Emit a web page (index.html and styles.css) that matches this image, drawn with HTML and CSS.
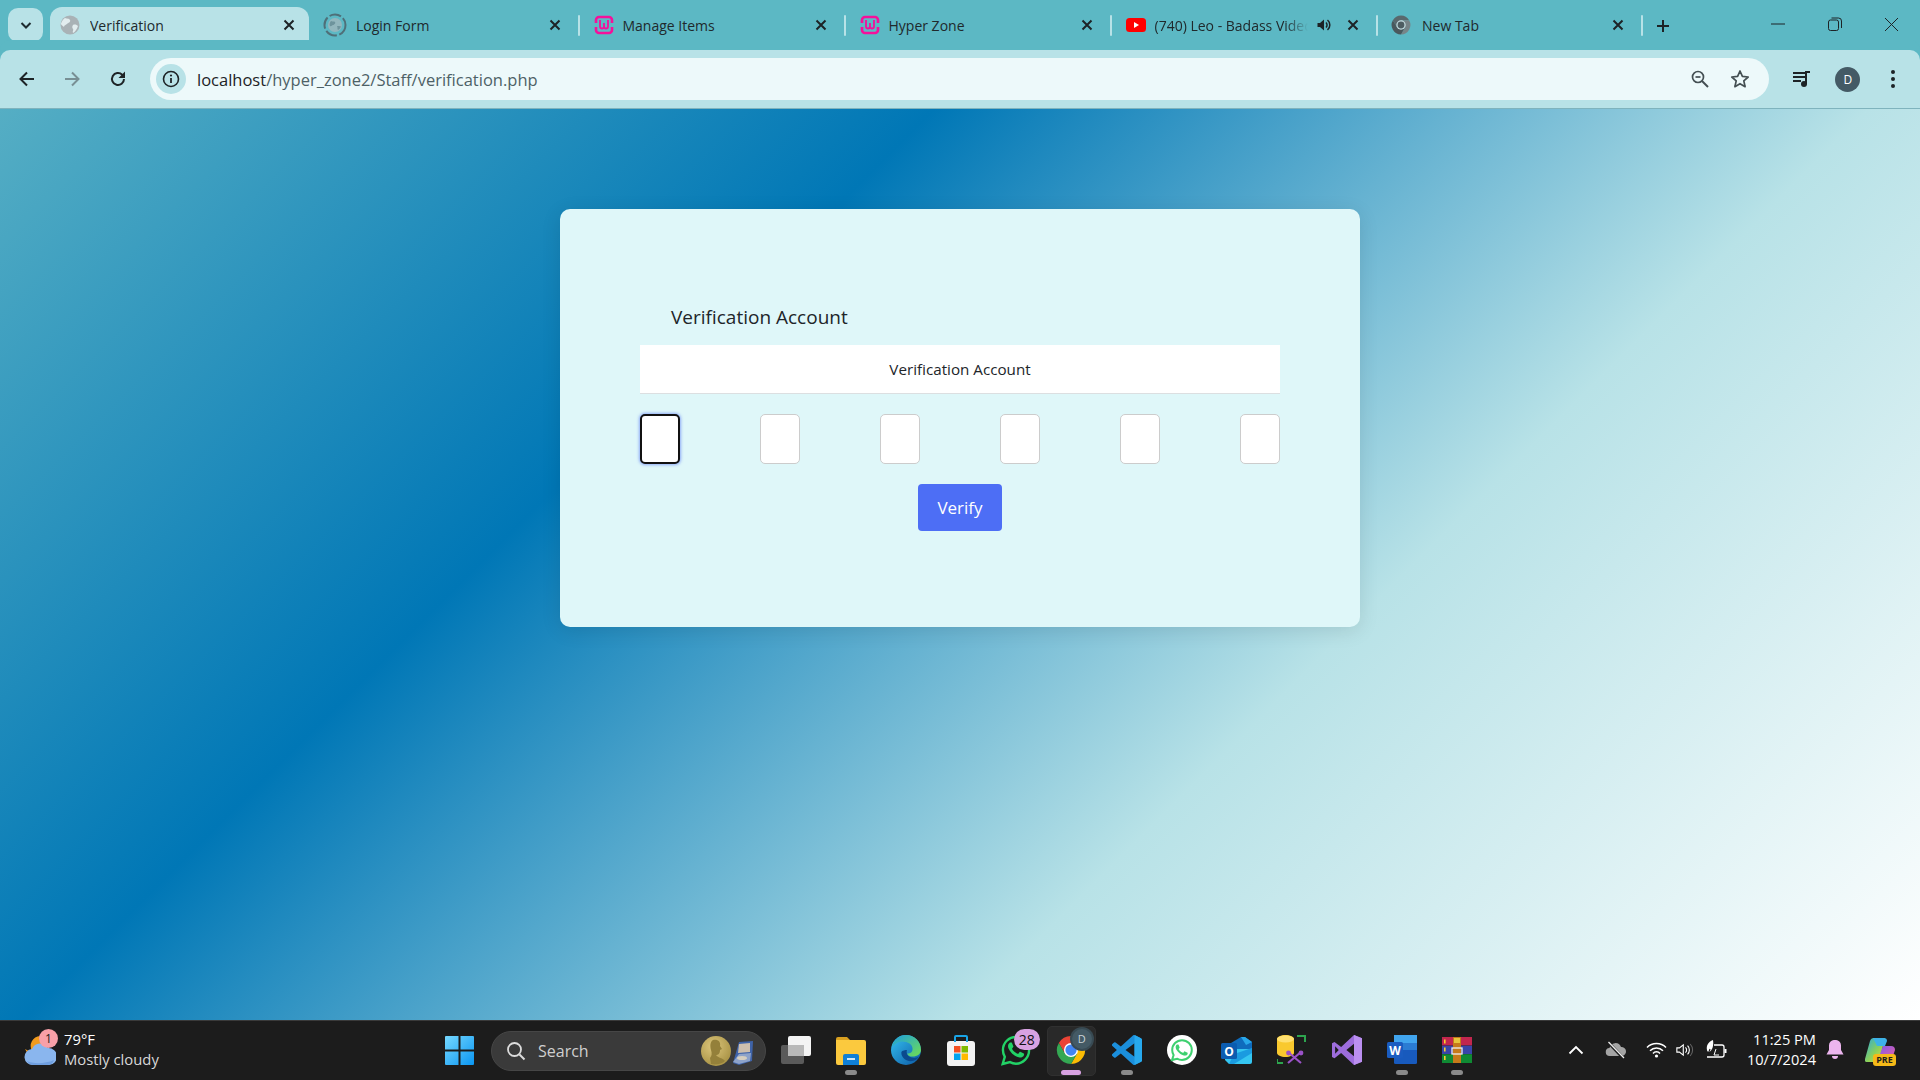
FILE: index.html
```html
<!DOCTYPE html>
<html lang="en">
<head>
<meta charset="utf-8">
<title>Verification</title>
<link rel="stylesheet" href="styles.css">
</head>
<body>
<header class="tabstrip">
  <div class="tab-search"><svg width="16" height="16" viewBox="0 0 16 16"><path d="M3.5 6 8 10.5 12.5 6" fill="none" stroke="#1d2b30" stroke-width="2"/></svg></div>
  <div class="tab tab-active">
    <svg class="fav" viewBox="0 0 20 20"><circle cx="10" cy="10" r="9.5" fill="#a9b2b6"/><path d="M5 3c2 1 4 0 5 2s-2 3-3 4-3 1-3 3c-1-1-3-2-3-3s2-5 4-6zM13 10c2-1 4 0 5 1-1 3-3 6-5 7-1-2 1-3 0-4s-1-3 0-4z" fill="#e2edef"/></svg>
    <span class="tab-title">Verification</span>
    <svg class="close" viewBox="0 0 16 16"><path d="M3.5 3.5l9 9m0-9l-9 9" stroke="#1d2326" stroke-width="2"/></svg>
  </div>
  <div class="tab tab-login">
    <svg class="fav fav-ring" viewBox="0 0 24 24"><circle cx="12" cy="12" r="10.5" fill="none" stroke="#4f6f78" stroke-width="2" stroke-dasharray="12 2.5"/><circle cx="12" cy="12" r="7" fill="#93b6bd"/><path d="M8 8c2 1 3 0 4 1s-1 3-2 3-2 2-3 1 0-4 1-5zM14 13c1 0 3 0 4 .5-.5 1.500-2 3-3 3.500-1-1 0-2-1-4z" fill="#6d939c"/></svg>
    <span class="tab-title">Login Form</span>
    <svg class="close" viewBox="0 0 16 16"><path d="M3.500 3.500l9 9m0-9l-9 9" stroke="#1d2326" stroke-width="2"/></svg>
  </div>
  <i class="sep"></i>
  <div class="tab">
    <svg class="fav" viewBox="0 0 20 20"><path d="M2 8V5a3 3 0 0 1 3-3h10a3 3 0 0 1 3 3v3M2 12v3a3 3 0 0 0 3 3h10a3 3 0 0 0 3-3v-3" fill="none" stroke="#f5109b" stroke-width="2.600"/><path d="M6 5v6.500a2 2 0 0 0 4 0V8m0 3.500a2 2 0 0 0 4 0V5" fill="none" stroke="#f5109b" stroke-width="1.800"/></svg>
    <span class="tab-title">Manage Items</span>
    <svg class="close" viewBox="0 0 16 16"><path d="M3.500 3.500l9 9m0-9l-9 9" stroke="#1d2326" stroke-width="2"/></svg>
  </div>
  <i class="sep"></i>
  <div class="tab">
    <svg class="fav" viewBox="0 0 20 20"><path d="M2 8V5a3 3 0 0 1 3-3h10a3 3 0 0 1 3 3v3M2 12v3a3 3 0 0 0 3 3h10a3 3 0 0 0 3-3v-3" fill="none" stroke="#f5109b" stroke-width="2.600"/><path d="M6 5v6.500a2 2 0 0 0 4 0V8m0 3.500a2 2 0 0 0 4 0V5" fill="none" stroke="#f5109b" stroke-width="1.800"/></svg>
    <span class="tab-title">Hyper Zone</span>
    <svg class="close" viewBox="0 0 16 16"><path d="M3.500 3.500l9 9m0-9l-9 9" stroke="#1d2326" stroke-width="2"/></svg>
  </div>
  <i class="sep"></i>
  <div class="tab">
    <svg class="fav" viewBox="0 0 20 20"><rect x="0" y="3" width="20" height="14" rx="3.500" fill="#f00"/><path d="M8 7l5 3-5 3z" fill="#fff"/></svg>
    <span class="tab-title tab-fade">(740) Leo - Badass Video Song</span>
    <svg class="speaker" viewBox="0 0 16 16"><path d="M1.500 6v4h2.500l4 3.500v-11L4 6z" fill="#1d2326"/><path d="M10 5.500a3.500 3.500 0 0 1 0 5M11.500 3a6.500 6.500 0 0 1 0 10" fill="none" stroke="#1d2326" stroke-width="1.500"/></svg>
    <svg class="close" viewBox="0 0 16 16"><path d="M3.500 3.500l9 9m0-9l-9 9" stroke="#1d2326" stroke-width="2"/></svg>
  </div>
  <i class="sep"></i>
  <div class="tab tab-newtab">
    <svg class="fav" viewBox="0 0 32 32"><path d="M3 8.500A15 15 0 0 1 29 8.500H16L9.500 19.750Z" fill="#59686d"/><path d="M29 8.500A15 15 0 0 1 16 31L22.500 19.750 16 8.500Z" fill="#778488"/><path d="M16 31A15 15 0 0 1 3 8.500L9.500 19.750H22.500Z" fill="#4a585d"/><circle cx="16" cy="16" r="7.500" fill="#c4dde1"/><circle cx="16" cy="16" r="5.500" fill="#4e5d62"/></svg>
    <span class="tab-title">New Tab</span>
    <svg class="close" viewBox="0 0 16 16"><path d="M3.500 3.500l9 9m0-9l-9 9" stroke="#1d2326" stroke-width="2"/></svg>
  </div>
  <i class="sep"></i>
  <div class="tab-plus"><svg width="16" height="16" viewBox="0 0 16 16"><path d="M8 2v12M2 8h12" stroke="#1d2326" stroke-width="2"/></svg></div>
  <div class="winctl">
    <span><svg width="14" height="14" viewBox="0 0 14 14"><path d="M0 7h14" stroke="#1d2326" stroke-width="1"/></svg></span>
    <span><svg width="14" height="14" viewBox="0 0 14 14"><rect x=".5" y="3" width="10" height="10.500" rx="2" fill="none" stroke="#1d2326"/><path d="M3.500 1h7a3 3 0 0 1 3 3v7" fill="none" stroke="#1d2326"/></svg></span>
    <span><svg width="15" height="15" viewBox="0 0 15 15"><path d="M1 1l13 13m0-13L1 14" stroke="#1d2326" stroke-width="1"/></svg></span>
  </div>
</header>

<nav class="toolbar">
  <div class="navbtn"><svg width="18" height="18" viewBox="0 0 18 18"><path d="M16 9H3M9 2.500 2.500 9 9 15.500" fill="none" stroke="#1d2326" stroke-width="2"/></svg></div>
  <div class="navbtn"><svg width="18" height="18" viewBox="0 0 18 18"><path d="M2 9h13M9 2.500 15.500 9 9 15.500" fill="none" stroke="#788f94" stroke-width="2"/></svg></div>
  <div class="navbtn"><svg width="18" height="18" viewBox="0 0 18 18"><path d="M15 9a6 6 0 1 1-1.800-4.300L15 6.500" fill="none" stroke="#1d2326" stroke-width="2"/><path d="M16 1.500V8H9.500z" fill="#1d2326"/></svg></div>
  <div class="omnibox">
    <div class="info-chip"><svg width="18" height="18" viewBox="0 0 18 18"><circle cx="9" cy="9" r="7.500" fill="none" stroke="#1d2326" stroke-width="1.600"/><path d="M9 8v5" stroke="#1d2326" stroke-width="1.800"/><circle cx="9" cy="5.500" r="1.100" fill="#1d2326"/></svg></div>
    <div class="url"><span class="url-host">localhost</span><span class="url-path">/hyper_zone2/Staff/verification.php</span></div>
    <div class="omni-btn"><svg width="20" height="20" viewBox="0 0 20 20"><circle cx="8" cy="8" r="5.500" fill="none" stroke="#444f52" stroke-width="1.700"/><path d="M5.500 8h5" stroke="#444f52" stroke-width="1.700"/><path d="M12 12l6 6" stroke="#444f52" stroke-width="1.900"/></svg></div>
    <div class="omni-btn"><svg width="20" height="20" viewBox="0 0 20 20"><path d="M10 2l2.400 5.400 5.800.6-4.400 3.900 1.300 5.800-5.100-3-5.100 3 1.300-5.800L1.800 8l5.800-.6z" fill="none" stroke="#444f52" stroke-width="1.700" stroke-linejoin="round"/></svg></div>
  </div>
  <div class="tool-end">
    <div class="navbtn"><svg width="20" height="20" viewBox="0 0 20 20"><path d="M1 4h12M1 8h12M1 12h8" stroke="#1d2326" stroke-width="2"/><path d="M14 15V3h4" fill="none" stroke="#1d2326" stroke-width="2"/><circle cx="12" cy="15" r="3" fill="#1d2326"/></svg></div>
    <div class="navbtn"><span class="avatar">D</span></div>
    <div class="navbtn"><svg width="6" height="20" viewBox="0 0 6 20"><circle cx="3" cy="3" r="2" fill="#1d2326"/><circle cx="3" cy="10" r="2" fill="#1d2326"/><circle cx="3" cy="17" r="2" fill="#1d2326"/></svg></div>
  </div>
</nav>

<main class="page">
  <section class="card">
    <h5 class="card-title">Verification Account</h5>
    <div class="card-header">Verification Account</div>
    <form class="code-row">
      <input class="code focused" type="text" maxlength="1">
      <input class="code" type="text" maxlength="1">
      <input class="code" type="text" maxlength="1">
      <input class="code" type="text" maxlength="1">
      <input class="code" type="text" maxlength="1">
      <input class="code" type="text" maxlength="1">
    </form>
    <div class="actions"><button class="verify" type="button">Verify</button></div>
  </section>
</main>

<footer class="taskbar">
  <div class="weather">
    <div class="weather-icon">
      <svg width="32" height="34" viewBox="0 0 32 34"><path d="M16 2a10 10 0 0 0-8 15 10 10 0 0 1-7-2 12 12 0 0 0 22 0C19 12 15 8 16 2z" fill="#f29b1d"/><path d="M9 31a8 8 0 0 1-1-16 9 9 0 0 1 16-1 7.500 7.500 0 0 1 1 17z" fill="#8ab6ee"/><path d="M3 27c6 3 18 3 27-1a7 7 0 0 1-6 5H9a8 8 0 0 1-6-4z" fill="#6f9fe0"/></svg>
      <span class="weather-badge">1</span>
    </div>
    <div class="weather-text"><div class="temp">79°F</div><div class="cond">Mostly cloudy</div></div>
  </div>
  <div class="task-start"><svg width="29" height="29" viewBox="0 0 29 29"><defs><linearGradient id="win" x1="0" y1="0" x2="1" y2="1"><stop offset="0" stop-color="#76d8ff"/><stop offset="1" stop-color="#0a96f2"/></linearGradient></defs><path d="M1 0h12.500v13.500H0V1a1 1 0 0 1 1-1zM15.500 0H28a1 1 0 0 1 1 1v12.500H15.500zM0 15.500h13.500V29H1a1 1 0 0 1-1-1zM15.500 15.500H29V28a1 1 0 0 1-1 1H15.500z" fill="url(#win)"/></svg></div>
  <div class="task-search">
    <svg width="20" height="20" viewBox="0 0 20 20"><circle cx="8.500" cy="8.500" r="6.500" fill="none" stroke="#dcdcdc" stroke-width="1.800"/><path d="M13.500 13.500l5 5" stroke="#dcdcdc" stroke-width="2"/></svg>
    <span class="search-label">Search</span>
    <svg class="medal" width="58" height="32" viewBox="0 0 58 32"><defs><radialGradient id="gold" cx=".4" cy=".35" r=".8"><stop offset="0" stop-color="#dcc67c"/><stop offset="1" stop-color="#a08a3c"/></radialGradient></defs><circle cx="21" cy="16" r="15" fill="url(#gold)"/><path d="M12 5c5-1 8 2 7 6l2 3-2 1c0 4-2 5-4 5 2 3 7 3 9 6-3 3-9 4-14 3l-1-6c2-2 2-5 1-8-1-4-1-8 2-10z" fill="#94803a" transform="translate(6 0)"/><path d="M38 28l6-21 14-1-1 20-13 4z" fill="#3f63a8"/><path d="M44 9l11-1v9l-12 1z" fill="#cdbfae"/><path d="M38 27l6-8 12-1-1 8-11 3z" fill="#8ea3c9"/><ellipse cx="47" cy="23" rx="5" ry="2" fill="#d6cfc0"/></svg>
  </div>
  <div class="task-items">
    <div class="task-item"><svg width="31" height="28" viewBox="0 0 31 28"><rect x="1" y="9" width="23" height="19" rx="2" fill="#5a5a5a"/><rect x="8" y="0" width="23" height="20" rx="2" fill="#f4f4f4"/><rect x="8" y="9" width="16" height="11" fill="#b9b9b9"/></svg></div>
    <div class="task-item"><svg width="30" height="30" viewBox="0 0 30 30"><path d="M0 4a2 2 0 0 1 2-2h9l3 3h-14z" fill="#d9a020"/><path d="M0 5h28a2 2 0 0 1 2 2v21a2 2 0 0 1-2 2H2a2 2 0 0 1-2-2z" fill="#fbc93e"/><path d="M7 21a2 2 0 0 1 2-2h12a2 2 0 0 1 2 2v9H7z" fill="#0f7fd6"/><rect x="11" y="23" width="8" height="2" fill="#cde8fb"/></svg><i class="dot"></i></div>
    <div class="task-item"><svg width="30" height="30" viewBox="0 0 32 32"><defs><linearGradient id="edge1" x1="0" y1="0" x2="1" y2="1"><stop offset="0" stop-color="#35c1f1"/><stop offset="1" stop-color="#0c59a4"/></linearGradient><linearGradient id="edge2" x1="0" y1="0" x2="1" y2="1"><stop offset="0" stop-color="#1b9de2"/><stop offset="1" stop-color="#70df50"/></linearGradient></defs><circle cx="16" cy="16" r="16" fill="url(#edge1)"/><path d="M1 12C3 5 9 0 16 0c9 0 16 7 16 16 0 4-4 7-9 7-3 0-5-1-6-3 4 0 6-2 6-5 0-5-5-8-11-8S4 11 1 12z" fill="url(#edge2)"/><path d="M11 19c0 5 5 9 10 9 4 0 7-2 9-5-2 1-5 2-8 1-4-1-6-4-5-8-3 0-6 1-6 3z" fill="#0b4a8e"/></svg></div>
    <div class="task-item"><svg width="30" height="32" viewBox="0 0 30 32"><rect x="1" y="7" width="28" height="25" rx="3" fill="#f3f3f3"/><path d="M9 8V3a1 1 0 0 1 1-1h10a1 1 0 0 1 1 1v5" fill="none" stroke="#19a4e6" stroke-width="2"/><rect x="8" y="12" width="6.500" height="6.500" fill="#f25022"/><rect x="15.500" y="12" width="6.500" height="6.500" fill="#7fba00"/><rect x="8" y="19.500" width="6.500" height="6.500" fill="#00a4ef"/><rect x="15.500" y="19.500" width="6.500" height="6.500" fill="#ffb900"/></svg></div>
    <div class="task-item"><svg width="32" height="32" viewBox="0 0 24 24"><path d="M12 2.200C6.600 2.200 2.200 6.600 2.200 12c0 1.900.5 3.600 1.400 5.100L2 22.500l5.500-1.400c1.400.8 3 1.200 4.500 1.200 5.400 0 9.800-4.700 9.800-10.100S17.400 2.200 12 2.200z" fill="none" stroke="#22d266" stroke-width="1.800"/><path d="M17.472 14.382c-.297-.149-1.758-.867-2.030-.967-.273-.099-.471-.148-.670.150-.197.297-.767.966-.940 1.164-.173.199-.347.223-.644.075-.297-.150-1.255-.463-2.390-1.475-.883-.788-1.480-1.761-1.653-2.059-.173-.297-.018-.458.130-.606.134-.133.298-.347.446-.520.149-.174.198-.298.298-.497.099-.198.050-.371-.025-.520-.075-.149-.669-1.612-.916-2.207-.242-.579-.487-.500-.669-.510-.173-.008-.371-.010-.570-.010-.198 0-.520.074-.792.372-.272.297-1.040 1.016-1.040 2.479 0 1.462 1.065 2.875 1.213 3.074.149.198 2.096 3.200 5.077 4.487.709.306 1.262.489 1.694.625.712.227 1.360.195 1.871.118.571-.085 1.758-.719 2.006-1.413.248-.694.248-1.289.173-1.413-.074-.124-.272-.198-.570-.347z" fill="#22d266"/></svg><span class="count-badge">28</span></div>
    <div class="task-item is-active"><svg width="30" height="30" viewBox="0 0 32 32"><path d="M3 8.500A15 15 0 0 1 29 8.500H16L9.500 19.750Z" fill="#ea4335"/><path d="M29 8.500A15 15 0 0 1 16 31L22.500 19.750 16 8.500Z" fill="#fbbc04"/><path d="M16 31A15 15 0 0 1 3 8.500L9.500 19.750H22.500Z" fill="#34a853"/><circle cx="16" cy="16" r="7.500" fill="#fff"/><circle cx="16" cy="16" r="6" fill="#4285f4"/></svg><span class="chrome-badge">D</span><i class="dot dot-active"></i></div>
    <div class="task-item"><svg width="30" height="30" viewBox="0 0 24 24"><path d="M23.150 2.587L18.210.210a1.494 1.494 0 0 0-1.705.290l-9.460 8.630-4.120-3.128a.999.999 0 0 0-1.276.057L.327 7.261A1 1 0 0 0 .326 8.740L3.899 12 .326 15.260a1 1 0 0 0 .001 1.479L1.650 17.940a.999.999 0 0 0 1.276.057l4.120-3.128 9.460 8.630a1.492 1.492 0 0 0 1.704.290l4.942-2.377A1.500 1.500 0 0 0 24 20.060V3.939a1.500 1.500 0 0 0-.850-1.352zm-5.146 14.861L10.826 12l7.178-5.448v10.896z" fill="#1b8fdc"/><path d="M18 0v24a2 2 0 0 0 1-.4l4-2A1.500 1.500 0 0 0 24 20V4a1.500 1.500 0 0 0-.850-1.400L19 .4A2 2 0 0 0 18 0z" fill="#27a9ee"/></svg><i class="dot"></i></div>
    <div class="task-item"><svg width="30" height="30" viewBox="0 0 30 30"><circle cx="15" cy="15" r="15" fill="#fff"/><g transform="translate(3 3)"><path d="M12 2.200C6.600 2.200 2.200 6.600 2.200 12c0 1.900.5 3.600 1.400 5.100L2 22l5-1.300c1.400.8 3 1.300 5 1.300 5.400 0 9.800-4.600 9.800-10S17.400 2.200 12 2.200z" fill="none" stroke="#3dd06f" stroke-width="2"/><path d="M17 14.400c-.3-.150-1.700-.850-2-1-.3-.100-.500-.150-.700.150l-.900 1.150c-.200.200-.350.200-.650.100-.300-.150-1.250-.450-2.400-1.500-.900-.800-1.450-1.750-1.650-2.050-.150-.300 0-.450.150-.600l.450-.500c.150-.200.200-.300.300-.500s.050-.400 0-.500l-.900-2.200c-.250-.600-.500-.500-.650-.500h-.600c-.200 0-.500.050-.800.350-.250.300-1 1-1 2.500s1.050 2.850 1.200 3.050c.150.200 2.100 3.200 5.100 4.500 2.500 1 3 .800 3.550.750.550-.100 1.750-.700 2-1.400.250-.700.250-1.300.150-1.400-.050-.100-.250-.200-.650-.350z" fill="#3dd06f"/></g></svg></div>
    <div class="task-item"><svg width="31" height="28" viewBox="0 0 31 28"><path d="M10 7l10-6h4l7 5v7L16 22z" fill="#0f6cbd"/><path d="M20 1h4l7 5-6 3z" fill="#28a8ea"/><path d="M4 13h27v13a2 2 0 0 1-2 2H8l-4-4z" fill="#35c6f1"/><path d="M13 18l18-6v5l-18 11H8z" fill="#1a9be0"/><rect x="0" y="7" width="16" height="16" rx="1.500" fill="#0b5cb0"/><text x="8" y="19.500" class="chip-letter">O</text></svg></div>
    <div class="task-item"><svg width="29" height="29" viewBox="0 0 29 29"><path d="M0 4c0-2 4-4 8.500-4S17 2 17 4v14c0 2-4 4-8.500 4S0 20 0 18z" fill="#f9c92e"/><ellipse cx="8.500" cy="4" rx="8.500" ry="3.500" fill="#ffe070"/><path d="M20 1h8v6M0 24v4h6" fill="none" stroke="#2da44e" stroke-width="2"/><path d="M11 17l13 11M24 17L11 28" stroke="#9a52c7" stroke-width="2.200"/><circle cx="11.500" cy="18" r="2.400" fill="#9a52c7"/><circle cx="24" cy="18" r="2.400" fill="#9a52c7"/></svg></div>
    <div class="task-item"><svg width="30" height="30" viewBox="0 0 24 24"><path d="M17.600 0 24 2.600v18.800L17.600 24 7.300 14.400l-5.300 4.100L0 17.500V6.500l2-1 5.300 4.100z" fill="#9d6ddc"/><path d="M17.600 0 24 2.600v18.800L17.600 24z" fill="#bb8ff0"/><path d="M17.600 7 11.500 12l6.100 5zM2.500 9v6l2.900-3z" fill="#1c1c1c"/></svg></div>
    <div class="task-item"><svg width="30" height="29" viewBox="0 0 30 29"><rect x="7" y="0" width="23" height="29" rx="1.500" fill="#185abd"/><rect x="7" y="0" width="23" height="8" fill="#41a5ee"/><rect x="7" y="8" width="23" height="7" fill="#2b7cd3"/><rect x="0" y="7" width="16" height="16" rx="1.500" fill="#1a5cc0"/><text x="8" y="19.500" class="chip-letter">W</text></svg><i class="dot"></i></div>
    <div class="task-item"><svg width="30" height="26" viewBox="0 0 30 26"><rect x="0" y="0" width="30" height="8.500" fill="#c2264e"/><rect x="0" y="8.700" width="30" height="8.300" fill="#3944a8"/><rect x="0" y="17.200" width="30" height="8.800" fill="#0f8a33"/><rect x="11" y="0" width="8" height="26" fill="#c57a1a"/><rect x="12" y="1" width="6" height="5" fill="#e6c43c"/><rect x="10" y="11" width="10" height="6" fill="none" stroke="#eee" stroke-width="1.300"/><rect x="2" y="2.500" width="1.600" height="4" fill="#f8d030"/><rect x="2" y="10.500" width="1.600" height="4" fill="#f8d030"/><rect x="2" y="19" width="1.600" height="4" fill="#f8d030"/></svg><i class="dot"></i></div>
  </div>
  <div class="tray">
    <div class="tray-item w40"><svg width="16" height="10" viewBox="0 0 16 10"><path d="M1.500 8.500 8 2l6.500 6.500" fill="none" stroke="#fff" stroke-width="1.800"/></svg></div>
    <div class="tray-item w40"><svg width="22" height="18" viewBox="0 0 22 18"><path d="M5 15a4 4 0 0 1-.5-8A6 6 0 0 1 16 6a4.500 4.500 0 0 1 1 9z" fill="#a4a4a4"/><path d="M3 1l15 16" stroke="#1c1c1c" stroke-width="3"/><path d="M3.500 1l15.500 16" stroke="#eee" stroke-width="1.300"/></svg></div>
    <div class="tray-item w40"><svg width="21" height="16" viewBox="0 0 21 16"><path d="M1 5.500a13.500 13.500 0 0 1 19 0M4 8.700a9 9 0 0 1 13 0M7 11.500a4.500 4.500 0 0 1 7 0" fill="none" stroke="#fff" stroke-width="1.500"/><circle cx="10.500" cy="14" r="1.600" fill="#fff"/></svg></div>
    <div class="tray-item w18"><svg width="21" height="16" viewBox="0 0 21 16"><path d="M1 5.500v5h3l4.500 3.500V2L4 5.500z" fill="none" stroke="#fff" stroke-width="1.300"/><path d="M11 5a4 4 0 0 1 0 6M13.500 3a7 7 0 0 1 0 10" fill="none" stroke="#fff" stroke-width="1.300"/><path d="M16.500 1a10 10 0 0 1 0 14" fill="none" stroke="#666" stroke-width="1.200"/></svg></div>
    <div class="tray-item w44"><svg width="21" height="19" viewBox="0 0 21 19"><path d="M7 0C2 2 0 6 1 10c0 1 1 2 2 2 3-1 5-6 4-12z" fill="#fff"/><path d="M1 17l3-8" stroke="#1c1c1c" stroke-width="1.200"/><path d="M8 5h8a2 2 0 0 1 2 2v8a2 2 0 0 1-2 2H1" fill="none" stroke="#fff" stroke-width="1.300"/><rect x="18.500" y="9" width="2" height="4" fill="#fff"/><path d="M10 9l-2 6h5" fill="none" stroke="#fff" stroke-width="1"/></svg></div>
    <div class="clock"><div>11:25 PM</div><div>10/7/2024</div></div>
    <div class="tray-item w38"><svg width="18" height="20" viewBox="0 0 18 20"><path d="M9 0a5.500 5.500 0 0 1 6 6v4l2.500 4.500H.5L3 10V6a5.500 5.500 0 0 1 6-6z" fill="#ecb5ee"/><path d="M6 16h6a3 3 0 0 1-6 0z" fill="#ecb5ee"/></svg></div>
    <div class="tray-item w52 copilot">
      <svg width="30" height="24" viewBox="0 0 30 24"><defs><linearGradient id="cop1" x1="0" y1="0" x2="1" y2="1"><stop offset="0" stop-color="#27a9e0"/><stop offset=".55" stop-color="#8ad05a"/><stop offset="1" stop-color="#f3d33c"/></linearGradient><linearGradient id="cop2" x1="0" y1="0" x2="1" y2="1"><stop offset="0" stop-color="#7a5af0"/><stop offset="1" stop-color="#f35f9a"/></linearGradient></defs><path d="M8 0h12l-6 24H2a2 2 0 0 1-2-3L5 3a4 4 0 0 1 3-3z" fill="url(#cop1)"/><path d="M18 8h8a4 4 0 0 1 4 4l-3 9a4 4 0 0 1-4 3H12z" fill="url(#cop2)"/><path d="M8 0h11a3 3 0 0 1 3 3L20 8h-8z" fill="#3db2e8"/></svg>
      <span class="pre-badge">PRE</span>
    </div>
  </div>
</footer>
</body>
</html>
```

FILE: styles.css
```css
* { box-sizing: border-box; }
html, body { height: 100%; }
body {
  margin: 0;
  height: 1080px;
  overflow: hidden;
  display: flex;
  flex-direction: column;
  font-family: "Open Sans", "Noto Sans", sans-serif;
  background: #1c1c1c;
}

/* tab strip */
.tabstrip {
  height: 50px;
  flex: none;
  display: flex;
  align-items: flex-end;
  background: #5cb8c4;
  padding-left: 8px;
  color: #20292c;
}
.tab-search {
  width: 35px;
  height: 34px;
  margin-right: 7px;
  align-self: flex-start;
  margin-top: 8px;
  border-radius: 10px;
  background: #b8e2e7;
  display: flex;
  align-items: center;
  justify-content: center;
}
.tab {
  position: relative;
  width: 264px;
  height: 43px;
  flex: none;
  display: flex;
  align-items: center;
  padding: 0 15px 7px 14px;
}
.tab-active {
  width: 259px;
  padding: 0 12px 7px 10px;
  background: #b8e2e7;
  border-radius: 12px 12px 0 0;
}
.tab-active::before,
.tab-active::after {
  content: "";
  position: absolute;
  bottom: 0;
  width: 12px;
  height: 12px;
}
.tab-active::before { left: -12px; background: radial-gradient(circle at 0 0, transparent 12px, #b8e2e7 12.5px); }
.tab-active::after { right: -12px; background: radial-gradient(circle at 100% 0, transparent 12px, #b8e2e7 12.5px); }
.tab-login { width: 269px; }
.tab-newtab { width: 263px; padding-left: 13px; }
.fav { width: 20px; height: 20px; flex: none; margin-right: 8.500px; }
.tab-active .fav { margin-right: 10px; }
.tab-newtab .fav { margin-right: 11px; }
.fav-ring { width: 24px; height: 24px; margin-right: 9px; }
.tab-title {
  flex: 1;
  min-width: 0;
  white-space: nowrap;
  overflow: hidden;
  font-size: 14px;
  line-height: 19px;
}
.tab-fade {
  -webkit-mask-image: linear-gradient(to right, #000 85%, transparent 100%);
  mask-image: linear-gradient(to right, #000 85%, transparent 100%);
}
.close { width: 16px; height: 16px; flex: none; }
.speaker { width: 16px; height: 16px; flex: none; margin: 0 13px 0 8px; }
.sep {
  width: 2px;
  height: 21px;
  flex: none;
  margin-bottom: 14px;
  background: #b8e2e7;
  border-radius: 1px;
}
.tab-plus {
  width: 28px;
  height: 28px;
  margin: 0 0 10px 6px;
  display: flex;
  align-items: center;
  justify-content: center;
}
.winctl {
  margin-left: auto;
  display: flex;
  align-self: stretch;
}
.winctl span {
  width: 57px;
  display: flex;
  align-items: center;
  justify-content: center;
  padding-bottom: 2px;
}

/* toolbar */
.toolbar {
  height: 59px;
  flex: none;
  display: flex;
  align-items: flex-start;
  padding: 8px 4px 0;
  background: #b8e2e7;
  border-bottom: 1px solid #7fb3bd;
  border-radius: 10px 10px 0 0;
  box-shadow: 0 -10px 0 0 #5cb8c4;
  position: relative;
}
.navbtn {
  width: 45.5px;
  height: 42px;
  flex: none;
  display: flex;
  align-items: center;
  justify-content: center;
}
.omnibox {
  flex: 1;
  min-width: 0;
  height: 42px;
  margin: 0 11px 0 9.500px;
  background: #edf9fa;
  border-radius: 21px;
  display: flex;
  align-items: center;
  padding: 0 9px 0 6px;
}
.info-chip {
  width: 30px;
  height: 30px;
  flex: none;
  border-radius: 50%;
  background: #b8e2e7;
  display: flex;
  align-items: center;
  justify-content: center;
}
.url {
  flex: 1;
  margin-left: 11px;
  padding-top: 1px;
  font-size: 16.500px;
  white-space: nowrap;
}
.url-host { color: #1d2326; }
.url-path { color: #4d6166; }
.omni-btn {
  width: 40px;
  height: 40px;
  flex: none;
  display: flex;
  align-items: center;
  justify-content: center;
}
.tool-end { display: flex; }
.avatar {
  width: 25px;
  height: 25px;
  border-radius: 50%;
  background: #445a65;
  color: #fff;
  font-size: 12px;
  display: flex;
  align-items: center;
  justify-content: center;
}

/* page */
.page {
  flex: 1;
  min-height: 0;
  background: linear-gradient(135deg, #55aec4 0%, #0077b6 33%, #b8e2e7 66%, #ffffff 100%);
}
.card {
  width: 800px;
  height: 418px;
  margin: 100px auto 0;
  padding: 95px 80px 0;
  background: #dff7f9;
  border-radius: 10px;
  box-shadow: 0 4px 20px rgba(0, 0, 0, .1);
  color: #212529;
}
.card-title {
  margin: 0;
  height: 41px;
  padding-left: 31px;
  font-size: 19px;
  font-weight: 400;
  line-height: 27px;
}
.card-header {
  height: 49px;
  background: #fff;
  border-bottom: 1px solid #dcdfe1;
  font-size: 15.200px;
  display: flex;
  align-items: center;
  justify-content: center;
}
.code-row {
  display: flex;
  justify-content: space-between;
  margin-top: 20px;
}
.code {
  width: 40px;
  height: 50px;
  padding: 0;
  background: #fff;
  border: 1px solid #ccc;
  border-radius: 5px;
  outline: none;
}
.code.focused {
  border: 2px solid #111;
  box-shadow: 0 0 3px 1px rgba(77, 110, 245, .55);
}
.actions {
  display: flex;
  justify-content: center;
  margin-top: 20px;
}
.verify {
  width: 84px;
  height: 47px;
  border: 0;
  border-radius: 4px;
  background: #4d6ef5;
  color: #fff;
  font-family: inherit;
  font-size: 17px;
}

/* taskbar */
.taskbar {
  height: 60px;
  flex: none;
  display: flex;
  align-items: center;
  background: #1c1c1c;
  border-top: 1px solid #3a3a3a;
  color: #fff;
}
.weather {
  width: 432px;
  flex: none;
  display: flex;
  align-items: center;
  padding-left: 24px;
}
.weather-icon { position: relative; width: 32px; height: 34px; }
.weather-badge {
  position: absolute;
  left: 15px;
  top: -5px;
  width: 19px;
  height: 19px;
  border-radius: 50%;
  background: #f8a0a8;
  color: #1c1c1c;
  font-size: 12px;
  line-height: 19px;
  text-align: center;
}
.weather-text { margin-left: 8px; padding-bottom: 3px; font-size: 14.800px; line-height: 20px; }
.cond { color: #d8d8d8; }
.task-start {
  width: 55px;
  flex: none;
  display: flex;
  justify-content: center;
}
.task-search {
  width: 275px;
  height: 40px;
  flex: none;
  margin-left: 4px;
  border-radius: 20px;
  background: #3a3a3a;
  border: 1px solid #464646;
  display: flex;
  align-items: center;
  padding-left: 14px;
}
.search-label { margin-left: 12px; font-size: 16px; color: #cfcfcf; flex: 1; }
.medal { margin-right: 12px; }
.task-items { display: flex; margin-left: 2.400px; }
.task-item {
  position: relative;
  width: 55.100px;
  height: 50px;
  flex: none;
  display: flex;
  align-items: center;
  justify-content: center;
  padding-bottom: 2px;
  border-radius: 5px;
}
.is-active::before {
  content: "";
  position: absolute;
  inset: 0 3px;
  background: #292929;
  border: 1px solid #303030;
  border-radius: 5px;
}
.task-item svg { position: relative; }
.dot {
  position: absolute;
  left: 50%;
  bottom: 1px;
  width: 12px;
  height: 5px;
  margin-left: -6px;
  border-radius: 3px;
  background: #8a8a8a;
}
.dot-active { width: 20px; margin-left: -10px; background: #d8a2e2; }
.count-badge {
  position: absolute;
  left: 25px;
  top: 3px;
  width: 26px;
  height: 21px;
  border-radius: 11px;
  background: #d8a2e2;
  color: #111;
  font-size: 14px;
  line-height: 21px;
  text-align: center;
}
.chrome-badge {
  position: absolute;
  left: 28px;
  top: 3px;
  width: 20px;
  height: 20px;
  border-radius: 50%;
  background: #445a65;
  color: #c9d4d8;
  font-size: 11px;
  line-height: 20px;
  text-align: center;
  box-shadow: 0 0 0 2px #384a53;
}
.chip-letter {
  fill: #fff;
  font-family: "Open Sans", sans-serif;
  font-size: 12px;
  font-weight: 700;
  text-anchor: middle;
}
.tray { margin-left: auto; display: flex; align-items: center; padding-right: 14px; }
.tray-item { display: flex; align-items: center; justify-content: center; flex: none; padding-bottom: 2px; }
.w40 { width: 40px; }
.w18 { width: 18px; }
.w44 { width: 44px; }
.w38 { width: 38px; }
.w52 { width: 52px; }
.clock {
  width: 78px;
  flex: none;
  padding-bottom: 3px;
  text-align: right;
  font-size: 14.600px;
  line-height: 20px;
  white-space: nowrap;
}
.copilot { position: relative; }
.pre-badge {
  position: absolute;
  left: 19px;
  top: 16px;
  width: 23px;
  height: 12px;
  border-radius: 3px;
  background: #f5b918;
  color: #1c1c1c;
  font-size: 9px;
  font-weight: 700;
  line-height: 12px;
  text-align: center;
}
```
